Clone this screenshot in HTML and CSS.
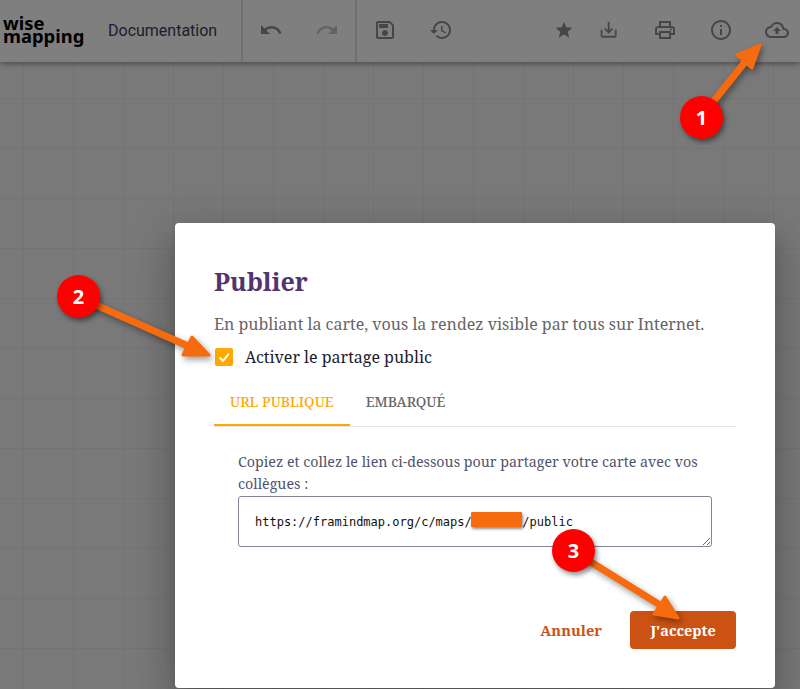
FILE: index.html
```html
<!DOCTYPE html>
<html lang="fr">

<head>
    <meta charset="UTF-8">
    <meta name="viewport" content="width=device-width, initial-scale=1.0">
    <title>Publier</title>
    <link rel="stylesheet" href="styles.css">
</head>

<body>
    <div class="page">
        <header class="toolbar">
            <div class="logo">wise<br>mapping</div>
            <div class="map-title">Documentation</div>
            <div class="tool-group">
                <svg class="icon" viewBox="0 0 24 24"><path d="M12.5 8c-2.65 0-5.05.99-6.9 2.6L2 7v9h9l-3.62-3.62c1.39-1.16 3.16-1.88 5.12-1.88 3.54 0 6.55 2.31 7.6 5.5l2.37-.78C21.08 11.03 17.15 8 12.5 8z"/></svg>
                <svg class="icon disabled" viewBox="0 0 24 24"><path d="M18.4 10.6C16.55 8.99 14.15 8 11.5 8c-4.65 0-8.58 3.03-9.96 7.22L3.9 16c1.05-3.19 4.05-5.5 7.6-5.5 1.95 0 3.73.72 5.12 1.88L13 16h9V7l-3.6 3.6z"/></svg>
            </div>
            <div class="tool-group">
                <svg class="icon" viewBox="0 0 24 24"><path d="M17 3H5c-1.11 0-2 .9-2 2v14c0 1.1.89 2 2 2h14c1.1 0 2-.9 2-2V7l-4-4zm2 16H5V5h11.17L19 7.83V19zm-7-7c-1.66 0-3 1.34-3 3s1.34 3 3 3 3-1.34 3-3-1.34-3-3-3zM6 6h9v4H6z"/></svg>
                <svg class="icon" viewBox="0 0 24 24"><path d="M13 3c-4.97 0-9 4.03-9 9H1l3.89 3.89.07.14L9 12H6c0-3.87 3.13-7 7-7s7 3.13 7 7-3.13 7-7 7c-1.93 0-3.68-.79-4.94-2.06l-1.42 1.42C8.27 19.99 10.51 21 13 21c4.97 0 9-4.03 9-9s-4.03-9-9-9zm-1 5v5l4.28 2.54.72-1.21-3.5-2.08V8H12z"/></svg>
            </div>
            <div class="tool-group right">
                <svg class="icon star" viewBox="0 0 24 24"><path d="M12 17.27L18.18 21l-1.64-7.03L22 9.24l-7.19-.61L12 2 9.19 8.63 2 9.24l5.46 4.73L5.82 21z"/></svg>
                <svg class="icon download" viewBox="0 0 24 24"><path d="M19 12v7H5v-7H3v7c0 1.1.9 2 2 2h14c1.1 0 2-.9 2-2v-7h-2zm-6 .67l2.59-2.58L17 11.5l-5 5-5-5 1.41-1.41L11 12.67V3h2z"/></svg>
                <svg class="icon" viewBox="0 0 24 24"><path d="M19 8h-1V3H6v5H5c-1.66 0-3 1.34-3 3v6h4v4h12v-4h4v-6c0-1.66-1.34-3-3-3zM8 5h8v3H8V5zm8 12v2H8v-4h8v2zm2-2v-2H6v2H4v-4c0-.55.45-1 1-1h14c.55 0 1 .45 1 1v4h-2z"/><circle cx="18" cy="11.5" r="1"/></svg>
                <svg class="icon" viewBox="0 0 24 24"><path d="M11 7h2v2h-2zm0 4h2v6h-2zm1-9C6.48 2 2 6.48 2 12s4.48 10 10 10 10-4.48 10-10S17.52 2 12 2zm0 18c-4.41 0-8-3.59-8-8s3.59-8 8-8 8 3.59 8 8-3.59 8-8 8z"/></svg>
                <svg class="icon" viewBox="0 0 24 24"><path d="M19.35 10.04C18.67 6.59 15.64 4 12 4 9.11 4 6.6 5.64 5.35 8.04 2.34 8.36 0 10.91 0 14c0 3.31 2.69 6 6 6h13c2.76 0 5-2.24 5-5 0-2.64-2.05-4.78-4.65-4.96zM19 18H6c-2.21 0-4-1.79-4-4 0-2.05 1.53-3.76 3.56-3.97l1.07-.11.5-.95C8.08 7.14 9.94 6 12 6c2.62 0 4.88 1.86 5.39 4.43l.3 1.5 1.53.11c1.56.1 2.78 1.41 2.78 2.96 0 1.65-1.35 3-3 3zM8 13h2.55v3h2.9v-3H16l-4-4z"/></svg>
            </div>
        </header>
        <div class="canvas"></div>

        <div class="backdrop">
            <div class="dialog">
                <h2 class="dialog-title">Publier</h2>
                <p class="dialog-text">En publiant la carte, vous la rendez visible par tous sur Internet.</p>
                <label class="check-row">
                    <span class="checkbox">
                        <svg viewBox="0 0 18 18"><path d="M4.5 9.5l3.5 3.5 6-7.5"/></svg>
                    </span>
                    Activer le partage public
                </label>
                <div class="tabs">
                    <div class="tab active">URL publique</div>
                    <div class="tab">Embarqué</div>
                </div>
                <div class="tab-panel">
                    <p class="panel-text">Copiez et collez le lien ci-dessous pour partager votre carte avec vos collègues :</p>
                    <textarea class="url-box" readonly>https://framindmap.org/c/maps/       /public</textarea>
                </div>
                <div class="actions">
                    <button class="btn-text">Annuler</button>
                    <button class="btn-primary">J'accepte</button>
                </div>
            </div>
        </div>

        <!-- annotations added on top of the screenshot -->
        <div class="redacted"></div>
        <svg class="arrows" viewBox="0 0 800 689">
            <g>
                <line x1="701" y1="117" x2="745" y2="62"/>
                <path d="M760 45L737 55L752 68Z"/>
            </g>
            <g>
                <line x1="78" y1="297" x2="188" y2="346"/>
                <path d="M209 355L192 337L183 355Z"/>
            </g>
            <g>
                <line x1="573" y1="551" x2="660" y2="605"/>
                <path d="M678 618L665 597L654 614Z"/>
            </g>
        </svg>
        <div class="badge badge-1">1</div>
        <div class="badge badge-2">2</div>
        <div class="badge badge-3">3</div>
    </div>
</body>

</html>
```

FILE: styles.css
```css
* {
    margin: 0;
    padding: 0;
    box-sizing: border-box;
}

body {
    font-family: "Noto Serif", "DejaVu Serif", serif;
    background: #797979;
}

.page {
    position: relative;
    width: 800px;
    height: 689px;
    overflow: hidden;
    display: flex;
    flex-direction: column;
}

.toolbar {
    height: 62px;
    background: #fff;
    display: flex;
    align-items: stretch;
    box-shadow: 0 2px 5px rgba(0, 0, 0, 0.35);
    position: relative;
    z-index: 1;
}

.logo {
    width: 108px;
    padding: 16px 0 0 3px;
    font-family: "Noto Sans", sans-serif;
    font-weight: 700;
    font-size: 18.4px;
    line-height: 13px;
    color: #000;
}

.map-title {
    width: 133px;
    font-family: Roboto, sans-serif;
    font-size: 16px;
    line-height: 61px;
    color: #3a3a5a;
}

.tool-group {
    display: flex;
    align-items: center;
    gap: 32px;
    padding: 0 16px 2px;
    border-left: 2px solid #e0e0e0;
}

.tool-group.right {
    margin-left: auto;
    padding: 0 11px 2px 0;
    border-left: none;
}

.icon {
    width: 24px;
    height: 24px;
    fill: #8d8d8d;
    flex: none;
}

.icon.disabled {
    fill: #c8c8c8;
}

.icon.star {
    width: 20px;
    height: 20px;
    margin-right: -8px;
}

.icon.download {
    width: 21.3px;
    height: 21.3px;
    margin-right: 1.3px;
}

.canvas {
    flex: 1;
    background-color: #f2f2f2;
    background-image:
        linear-gradient(#e8e8e8 1px, transparent 1px),
        linear-gradient(90deg, #e8e8e8 1px, transparent 1px);
    background-size: 50px 50px;
    background-position: 23px 36px;
}

.backdrop {
    position: absolute;
    inset: 0;
    background: rgba(0, 0, 0, 0.5);
    z-index: 2;
    padding: 223px 25px 0 175px;
}

.dialog {
    height: 465px;
    background: #fff;
    border-radius: 4px;
    padding: 40px 39px 0;
    box-shadow:
        0 11px 15px -7px rgba(0, 0, 0, 0.2),
        0 24px 38px 3px rgba(0, 0, 0, 0.14),
        0 9px 46px 8px rgba(0, 0, 0, 0.12);
}

.dialog-title {
    font-size: 25px;
    line-height: 36px;
    font-weight: 700;
    color: #52356f;
}

.dialog-text {
    margin-top: 13px;
    font-size: 16px;
    line-height: 24px;
    color: #666;
}

.check-row {
    display: flex;
    align-items: center;
    gap: 12px;
    margin-top: 9px;
    font-size: 16px;
    line-height: 24px;
    color: #1c1c30;
}

.checkbox {
    width: 18px;
    height: 18px;
    margin-left: 1px;
    border-radius: 2px;
    background: #ffa800;
}

.checkbox svg {
    display: block;
    fill: none;
    stroke: #fff;
    stroke-width: 2;
}

.tabs {
    display: flex;
    margin-top: 13px;
    box-shadow: inset 0 -1px 0 #e4e4e4;
    height: 45px;
}

.tab {
    padding: 0 16px;
    height: 44px;
    line-height: 40px;
    font-size: 14px;
    font-weight: 500;
    text-transform: uppercase;
    color: #666;
}

.tab.active {
    color: #ffa800;
    border-bottom: 2px solid #ffa800;
}

.tab-panel {
    padding: 24px 24px 0;
}

.panel-text {
    font-size: 14.25px;
    line-height: 22px;
    color: #50546e;
}

.url-box {
    display: block;
    width: 474px;
    height: 51px;
    margin-top: 1px;
    padding: 17px 16px 15px;
    border: 1px solid #85859a;
    border-radius: 3px;
    font-family: "DejaVu Sans Mono", monospace;
    font-size: 12px;
    line-height: 17px;
    color: #111;
    outline: none;
}

.actions {
    display: flex;
    justify-content: flex-end;
    align-items: center;
    gap: 28px;
    margin-top: 64px;
}

.btn-text,
.btn-primary {
    font-family: inherit;
    font-size: 14.4px;
    font-weight: 700;
    border: none;
    background: none;
    color: #cc5214;
}

.btn-text {
    font-size: 14.7px;
}

.btn-primary {
    width: 106px;
    height: 38px;
    border-radius: 4px;
    background: #cc5214;
    color: #fff;
}

.redacted {
    position: absolute;
    left: 471px;
    top: 512px;
    width: 51px;
    height: 15px;
    border-radius: 1px;
    background: #f56b0e;
    box-shadow: 1px 2px 3px rgba(0, 0, 0, 0.45);
    z-index: 3;
}

.arrows {
    position: absolute;
    inset: 0;
    width: 800px;
    height: 689px;
    fill: #f56b0e;
    stroke: #f56b0e;
    stroke-linejoin: round;
    filter: drop-shadow(2px 3px 3px rgba(0, 0, 0, 0.4));
    z-index: 3;
}

.arrows line {
    stroke-width: 7;
}

.arrows path {
    stroke-width: 3;
}

.badge {
    position: absolute;
    width: 43px;
    height: 43px;
    border-radius: 50%;
    background: #f00;
    color: #fff;
    font-family: "Open Sans", sans-serif;
    font-weight: 700;
    font-size: 20px;
    line-height: 43px;
    text-align: center;
    box-shadow: 2px 3px 5px rgba(0, 0, 0, 0.45);
    z-index: 4;
}

.badge-1 {
    left: 680px;
    top: 96px;
}

.badge-2 {
    left: 57px;
    top: 275px;
}

.badge-3 {
    left: 552px;
    top: 529px;
}
```
